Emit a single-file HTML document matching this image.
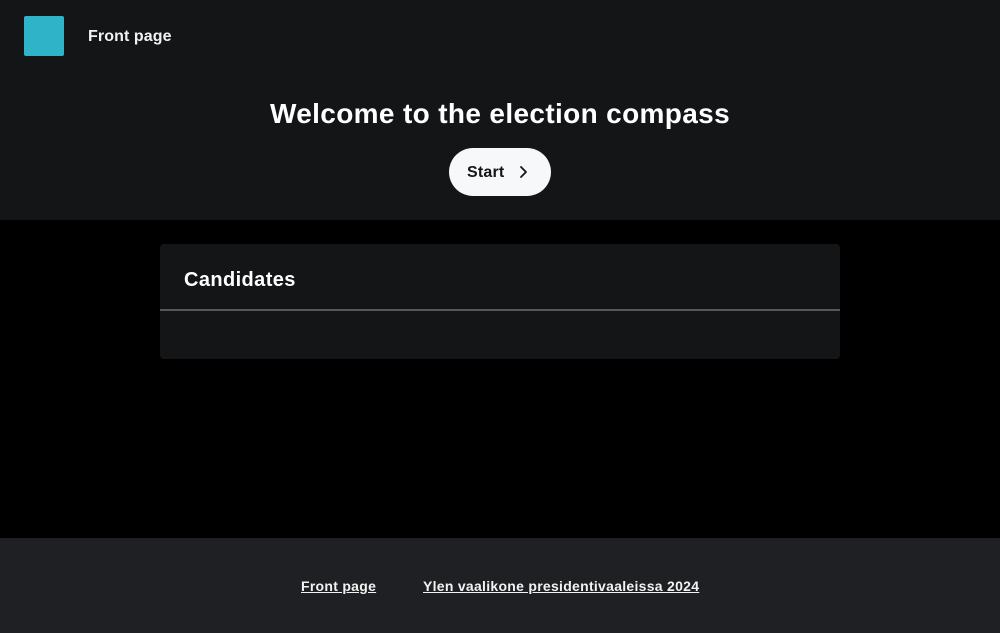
<!DOCTYPE html>
<html><head><meta charset="utf-8"><style>
*{margin:0;padding:0;box-sizing:border-box}
body{width:1000px;height:633px;background:#000;font-family:"Liberation Sans",sans-serif;overflow:hidden;position:relative}
.top{position:absolute;left:0;top:0;width:1000px;height:220px;background:#141517}
.logo{position:absolute;left:24px;top:16px;width:40px;height:40px;background:#2fb3c8;border-radius:2px}
.nav{position:absolute;left:88px;top:28px;color:#f2f2f2;font-weight:bold;font-size:16px;letter-spacing:0.1px}
h1{position:absolute;top:98px;left:0;width:1000px;text-align:center;color:#fff;font-size:28px;font-weight:bold;letter-spacing:0.35px}
.btn{position:absolute;left:449px;top:148px;width:102px;height:48px;border-radius:24px;background:#f7f8fa;color:#141517;font-weight:bold;font-size:16px}
.btn span{position:absolute;left:18px;top:16px;letter-spacing:0.2px}
.card{position:absolute;left:160px;top:244px;width:680px;height:115px;background:#141517;border-radius:4px}
.card h2{position:absolute;left:24px;top:25px;color:#fff;font-size:20px;font-weight:bold;letter-spacing:0.4px}
.card .ln{position:absolute;left:0;top:65px;width:680px;height:2px;background:#55575c}
.foot{position:absolute;left:0;top:538px;width:1000px;height:95px;background:#1f2023}
.foot a{position:absolute;top:40px;color:#f2f2f2;font-size:14px;font-weight:bold;text-decoration:underline;letter-spacing:0.28px}
</style></head><body>
<div class="top">
<div class="logo"></div>
<div class="nav">Front page</div>
<h1>Welcome to the election compass</h1>
<div class="btn"><span>Start</span>
<svg style="left:66px;top:16px;position:absolute" width="16" height="16" viewBox="0 0 16 16"><path d="M6 3l5 5-5 5" fill="none" stroke="#141517" stroke-width="1.8" stroke-linecap="round" stroke-linejoin="round"/></svg>
</div>
</div>
<div class="card"><h2>Candidates</h2><div class="ln"></div></div>
<div class="foot">
<a style="left:301px">Front page</a>
<a style="left:423px">Ylen vaalikone presidentivaaleissa 2024</a>
</div>
</body></html>
